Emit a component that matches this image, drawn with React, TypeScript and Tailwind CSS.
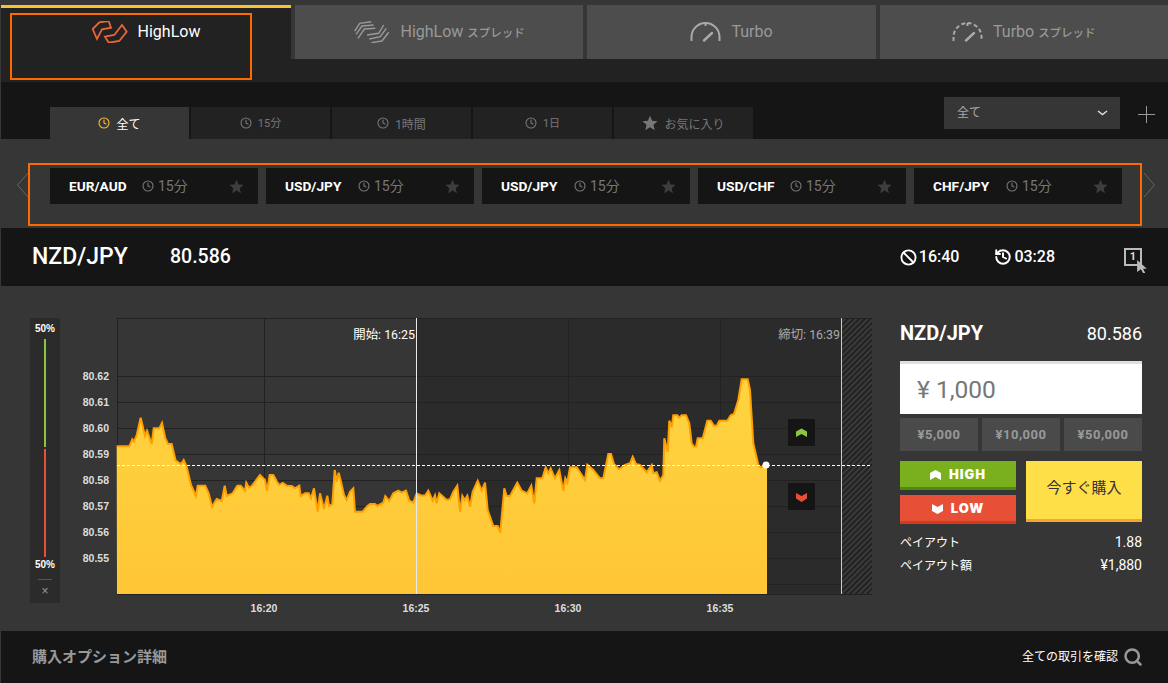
import { Ban, Clock, History, Search } from "lucide-react";

// chart outline traced from the picture, three crops each with their own x offset
const seg1 = [[290,409],[328,409],[337,388],[342,395],[350,375],[362,323],[375,378],[381,362],[395,402],[401,355],[418,355],[426,339],[436,385],[444,402],[455,402],[467,452],[483,462],[491,450],[500,470],[513,525],[528,558],[533,527],[556,527],[566,550],[576,590],[590,567],[605,573],[614,527],[620,558],[638,550],[652,527],[662,527],[675,543],[679,518],[687,533],[695,528],[720,495],[735,510],[741,543],[749,495],[760,495],[772,517],[778,525],[788,519],[800,527],[815,528],[825,535],[838,527],[842,558],[855,550],[866,550],[873,565],[882,535],[893,605]];
const seg2 = [[0,550],[12,597],[22,557],[27,588],[37,583],[44,480],[50,515],[56,488],[63,515],[72,555],[80,570],[90,545],[100,535],[105,605],[115,605],[128,605],[140,590],[150,582],[165,582],[172,588],[190,578],[196,558],[208,573],[220,550],[235,542],[245,548],[258,542],[268,572],[280,578],[290,550],[305,557],[316,556],[325,542],[338,572],[345,556],[350,580],[358,550],[380,570],[390,568],[400,545],[412,527],[420,605],[427,557],[434,570],[442,557],[450,590],[458,545],[473,512],[485,542],[495,518],[503,600],[520,648],[533,648],[541,668],[553,535],[560,558],[570,558],[592,518],[605,542],[622,550],[634,527],[643,580],[650,505],[667,505],[677,472],[685,490],[692,475],[705,505],[718,480],[730,543],[736,505],[742,518],[750,472],[770,472],[782,490],[795,510],[802,464],[820,480]];
const seg3 = [[0,505],[10,505],[25,432],[33,432],[42,462],[57,478],[75,465],[90,460],[98,440],[108,462],[120,465],[140,487],[155,465],[160,490],[170,487],[180,512],[190,495],[193,385],[203,425],[208,332],[215,352],[220,316],[232,316],[237,323],[245,316],[258,316],[268,340],[275,400],[282,410],[288,410],[293,385],[308,385],[322,332],[332,332],[342,347],[350,347],[358,332],[382,332],[392,316],[402,312],[415,270],[425,208],[443,208],[450,240],[460,400],[475,465],[482,472],[497,465]];

const toPts = (seg: number[][], off: number) =>
  seg.map(([x, y]) => `${(off + x / 3).toFixed(1)},${(310 + y / 3).toFixed(1)}`);
const outline = [...toPts(seg1, 20), ...toPts(seg2, 320), ...toPts(seg3, 600)].join(" ");
const area = `117,594 ${outline} 767,465 767,594`;

const yLabels = [
  ["80.62", 376], ["80.61", 402], ["80.60", 428], ["80.59", 454],
  ["80.58", 480], ["80.57", 506], ["80.56", 532], ["80.55", 558],
] as const;
const gridY = [376, 402, 428, 454, 480, 506, 532, 558, 584];
const gridX = [264, 568, 720];
const xLabels = [["16:20", 264], ["16:25", 416], ["16:30", 568], ["16:35", 720]] as const;

function HighLowLogo() {
  return (
    <svg width="36" height="22" viewBox="6 6 36 22" fill="none" stroke="#e8673a" strokeWidth="1.8">
      <polygon points="6.7,14 13.3,7.3 22.7,6 25,12.7 16,14.3 11,24" />
      <polygon points="36,10 40.7,16.7 33.3,26 22.7,27.7 19,21.7 28.3,20" />
    </svg>
  );
}

function SpreadLogo() {
  return (
    <svg width="37" height="22" viewBox="6 6 37 22" fill="none" stroke="#999" strokeWidth="1.4">
      <polyline points="7.7,16 12.7,8.3 24.3,6.7" />
      <polyline points="9,19.3 15,11 26.7,10" />
      <polyline points="11,23.3 17.3,14 28.3,13.3" />
      <polyline points="20,20 31.7,18.3 36.7,10" />
      <polyline points="22.3,24 33.3,21.7 39.3,13.3" />
      <polyline points="24.3,27.7 35,26 41.7,17.3" />
    </svg>
  );
}

function Gauge({ dashed }: { dashed?: boolean }) {
  return (
    <svg width="31" height="21" viewBox="0 0 31 21" fill="none" stroke="#aaa" strokeWidth="2">
      <path
        d="M1.5 20 V16 A14 14 0 0 1 29.5 16 V20"
        strokeDasharray={dashed ? "4 2.5" : undefined}
      />
      <path d="M15.5 2 V5" />
      <path d="M14 19.5 L22 12" strokeWidth="2.4" strokeLinecap="round" />
    </svg>
  );
}

function StarIcon({ size, color, className }: { size: number; color: string; className?: string }) {
  return (
    <svg width={size} height={size} viewBox="0 0 24 24" fill={color} className={className}>
      <polygon points="12,1 15.2,8.6 23.4,9.3 17.2,14.7 19.1,22.8 12,18.5 4.9,22.8 6.8,14.7 .6,9.3 8.8,8.6" />
    </svg>
  );
}

function TopTab({ active, children }: { active?: boolean; children: React.ReactNode }) {
  return (
    <div className={active
      ? "w-[290px] h-[54px] flex justify-center items-start gap-[10px] pt-[13px] bg-[#222222] border-t-[3px] border-[#fbc02d] text-white"
      : "flex-1 h-[54px] flex justify-center items-start gap-[10px] pt-[16px] bg-[#4d4d4d] text-[#999999]"}>
      {children}
    </div>
  );
}

function SubTab({ label, active, star, small }: { label: string; active?: boolean; star?: boolean; small?: boolean }) {
  return (
    <div className={active
      ? "w-[139px] h-[32px] flex items-center justify-center gap-[6px] bg-[#363636] text-white"
      : "w-[139px] h-[32px] flex items-center justify-center gap-[6px] bg-[#222222] text-[#777777]"}>
      {star
        ? <StarIcon size={16} color="#777777" />
        : <Clock size={12} strokeWidth={2.2} className={active ? "text-[#fbc02d]" : "text-[#777777]"} />}
      <span className={small ? "mt-[3px] text-[11px]" : "mt-[3px] text-[12px]"}>{label}</span>
    </div>
  );
}

function Pill({ pair }: { pair: string }) {
  return (
    <div className="w-[208px] h-[36px] flex items-center pl-[19px] pr-[14px] bg-[#151515]">
      <span className="w-[58px] text-[13.7px] font-bold text-white whitespace-nowrap">{pair}</span>
      <Clock size={12} strokeWidth={2.2} className="ml-[15px] text-[#777777]" />
      <span className="ml-[4px] text-[14px] text-[#777777]">15分</span>
      <StarIcon size={15} color="#3d3d3d" className="ml-auto" />
    </div>
  );
}

function Chart() {
  return (
    <svg width="802" height="307" viewBox="70 318 802 307" className="ml-[10px] shrink-0">
      <defs>
        <linearGradient id="fill" x1="0" y1="0" x2="0" y2="1">
          <stop offset="0" stopColor="#ffd440" />
          <stop offset="1" stopColor="#ffc636" />
        </linearGradient>
        <pattern id="hatch" width="4" height="4" patternUnits="userSpaceOnUse" patternTransform="rotate(45)">
          <rect width="4" height="4" fill="#3a3a3a" />
          <rect width="2" height="4" fill="#222222" />
        </pattern>
      </defs>
      <rect x="416" y="318" width="426" height="276" fill="#2b2b2b" />
      <rect x="842" y="318" width="30" height="276" fill="url(#hatch)" />
      {gridY.map((y) => (
        <line key={y} x1="117" x2="842" y1={y + 0.5} y2={y + 0.5} stroke="#222222" />
      ))}
      {gridX.map((x) => (
        <line key={x} x1={x + 0.5} x2={x + 0.5} y1="318" y2="594" stroke="#222222" />
      ))}
      <line x1="117" x2="872" y1="318.5" y2="318.5" stroke="#222222" />
      <line x1="117.5" x2="117.5" y1="318" y2="594" stroke="#222222" />

      <polygon points={area} fill="url(#fill)" />
      <polyline points={outline} fill="none" stroke="#ffa000" strokeWidth="2" />
      <line x1="117" x2="872" y1="594.5" y2="594.5" stroke="#222222" />
      <line x1="416.5" x2="416.5" y1="318" y2="594" stroke="#e8e8e8" />
      <line x1="841.5" x2="841.5" y1="318" y2="594" stroke="#cccccc" />
      <line x1="117" x2="872" y1="465.5" y2="465.5" stroke="#ffffff" strokeDasharray="3 2" />
      <circle cx="766" cy="465" r="3.5" fill="#ffffff" />

      <text x="415" y="339" textAnchor="end" fontSize="12.4" fill="#ffffff">開始: 16:25</text>
      <text x="840" y="339" textAnchor="end" fontSize="12.4" fill="#aaaaaa">締切: 16:39</text>

      <rect x="788" y="419" width="27" height="27" fill="#151515" />
      <polygon points="801.5,428.5 807,431.5 807,437 801.5,434 796,437 796,431.5" fill="#8cc63f" />
      <rect x="788" y="483" width="27" height="27" fill="#151515" />
      <polygon points="796,493 801.5,496 807,493 807,498.5 801.5,502 796,498.5" fill="#e75037" />

      {yLabels.map(([t, y]) => (
        <text key={t} x="109" y={y + 4} textAnchor="end" fontSize="10.5" fontWeight="700" fill="#dddddd" className="font-['Liberation_Sans']">{t}</text>
      ))}
      {xLabels.map(([t, x]) => (
        <text key={t} x={x} y="612" textAnchor="middle" fontSize="10.5" fontWeight="700" fill="#dddddd" className="font-['Liberation_Sans']">{t}</text>
      ))}
    </svg>
  );
}

export default function App() {
  return (
    <div className="w-[1168px] h-[683px] overflow-hidden pl-px bg-[#363636] font-['Roboto','Noto_Sans_CJK_JP',sans-serif]">
      {/* product tabs */}
      <div className="relative pt-[5px] flex gap-[4px]">
        <TopTab active>
          <HighLowLogo />
          <span className="mt-px text-[16px] leading-[20px]">HighLow</span>
        </TopTab>
        <TopTab>
          <SpreadLogo />
          <span className="mt-px text-[16px] leading-[20px]">HighLow <span className="text-[11.5px] font-medium">スプレッド</span></span>
        </TopTab>
        <TopTab>
          <Gauge />
          <span className="mt-px text-[16px] leading-[20px]">Turbo</span>
        </TopTab>
        <TopTab>
          <Gauge dashed />
          <span className="mt-px text-[16px] leading-[20px]">Turbo <span className="text-[11.5px] font-medium">スプレッド</span></span>
        </TopTab>
        <div className="absolute left-[9px] top-[13px] w-[242px] h-[67px] border-2 border-[#ff6a00]" />
      </div>
      <div className="h-[23px] bg-[#222222]" />

      {/* time filter */}
      <div className="h-[57px] flex items-end pl-[49px] bg-[#151515]">
        <div className="flex gap-[2px]">
          <SubTab label="全て" active />
          <SubTab label="15分" small />
          <SubTab label="1時間" />
          <SubTab label="1日" small />
          <SubTab label="お気に入り" star />
        </div>
        <div className="self-start mt-[15px] ml-[191px] w-[176px] h-[32px] flex items-center justify-between pl-[13px] pr-[12px] bg-[#363636] text-[12px] text-[#aaaaaa]">
          <span>全て</span>
          <svg width="11" height="6" viewBox="0 0 11 6" fill="none" stroke="#dddddd" strokeWidth="1.5"><path d="M1 1 L5.5 4.5 L10 1" /></svg>
        </div>
        <svg width="17" height="17" viewBox="0 0 17 17" stroke="#999999" className="self-start mt-[24px] ml-[18px]">
          <path d="M8.5 0 V17 M0 8.5 H17" />
        </svg>
      </div>

      {/* favourites strip */}
      <div className="h-[89px] flex pl-[16px] pt-[24px]">
        <svg width="11" height="24" viewBox="0 0 11 24" fill="none" stroke="#666666" className="mt-[10px]">
          <path d="M11 0 L0.5 12 L11 24" />
        </svg>
        <div className="w-[1114px] h-[63px] flex gap-[8px] pl-[20px] pt-[3px] border-2 border-[#ff6a00]">
          <Pill pair="EUR/AUD" />
          <Pill pair="USD/JPY" />
          <Pill pair="USD/JPY" />
          <Pill pair="USD/CHF" />
          <Pill pair="CHF/JPY" />
        </div>
        <svg width="11" height="24" viewBox="0 0 11 24" fill="none" stroke="#666666" className="mt-[10px] ml-[2px]">
          <path d="M0 0 L10.5 12 L0 24" />
        </svg>
      </div>

      {/* current pair */}
      <div className="h-[58px] flex items-center pl-[31px] bg-[#151515] text-white">
        <span className="w-[138px] text-[23px] font-medium">NZD/JPY</span>
        <span className="text-[19.5px] font-medium">80.586</span>
        <div className="ml-auto flex items-center text-[16px] font-medium">
          <Ban size={17} strokeWidth={2.6} />
          <span className="ml-[2px]">16:40</span>
          <History size={18} strokeWidth={2.6} className="ml-[35px]" />
          <span className="ml-[2px]">03:28</span>
          <div className="relative ml-[69px] mr-[26px] w-[18px] h-[18px] flex items-center justify-center border-2 border-[#bbbbbb] text-[11px] font-bold text-[#dddddd]">
            1
            <svg width="10" height="13" viewBox="0 0 9 12" fill="#bbbbbb" className="absolute -right-[7px] top-[10px]">
              <path d="M0 0 L9 8 L5.5 8 L7.5 12 L5.5 12 L3.5 8.5 L0 11 Z" />
            </svg>
          </div>
        </div>
      </div>

      {/* chart and order panel */}
      <div className="h-[345px] flex items-start pt-[32px] pl-[29px]">
        <div className="w-[30px] h-[285px] shrink-0 flex flex-col items-center bg-[#2b2b2b] text-[10px] font-bold text-white font-['Liberation_Sans']">
          <span className="mt-[5px] leading-[12px]">50%</span>
          <div className="mt-[4px] w-[2px] h-[108px] bg-[#8cc63f]" />
          <div className="mt-[2px] w-[2px] h-[108px] bg-[#e75037]" />
          <span className="mt-[2px] leading-[12px]">50%</span>
          <div className="mt-[8px] w-[14px] h-px bg-[#555555]" />
          <span className="mt-[5px] leading-[12px] text-[12px] font-normal text-[#999999]">×</span>
        </div>
        <Chart />
        <div className="ml-[28px] w-[242px] shrink-0 text-white">
          <div className="flex items-center justify-between h-[30px]">
            <span className="text-[20px] font-bold">NZD/JPY</span>
            <span className="text-[18px]">80.586</span>
          </div>
          <div className="mt-[13px] h-[53px] flex items-center pl-[17px] pt-[2px] bg-white border-t-[3px] border-[#e0e0e0] text-[24.5px] text-[#777777]">¥ 1,000</div>
          <div className="mt-[4px] grid grid-cols-3 gap-[4px]">
            {["¥5,000", "¥10,000", "¥50,000"].map((v) => (
              <div key={v} className="h-[33px] flex items-center justify-center bg-[#4a4a4a] text-[13px] font-bold tracking-[0.5px] text-[#999999]">{v}</div>
            ))}
          </div>
          <div className="mt-[10px] flex justify-between">
            <div className="w-[116px] flex flex-col gap-[5px]">
              <div className="h-[29px] flex items-center justify-center gap-[8px] pt-px bg-[#7ab01e] border-b-[3px] border-[#4f8a10] text-[13px] font-black tracking-[1px] font-['Inter',sans-serif]">
                <svg width="11" height="10" viewBox="0 0 11 10" fill="#ffffff"><polygon points="5.5,0 11,3 11,10 5.5,7 0,10 0,3" /></svg>
                HIGH
              </div>
              <div className="h-[29px] flex items-center justify-center gap-[8px] pt-px bg-[#e75037] border-b-[3px] border-[#d63a1c] text-[13px] font-black tracking-[1px] font-['Inter',sans-serif]">
                <svg width="11" height="10" viewBox="0 0 11 10" fill="#ffffff"><polygon points="0,0 5.5,3 11,0 11,7 5.5,10 0,7" /></svg>
                LOW
              </div>
            </div>
            <div className="w-[116px] h-[61px] flex items-center justify-center pb-[3px] bg-[#ffdf47] border-b-[3px] border-[#f7a635] text-[15px] text-[#333333]">今すぐ購入</div>
          </div>
          <div className="mt-[7px] flex justify-between items-center h-[23px]">
            <span className="text-[12px]">ペイアウト</span>
            <span className="text-[14px]">1.88</span>
          </div>
          <div className="flex justify-between items-center h-[23px]">
            <span className="text-[12px]">ペイアウト額</span>
            <span className="text-[14px]">¥1,880</span>
          </div>
        </div>
      </div>

      {/* footer */}
      <div className="h-[52px] flex items-center pl-[31px] pr-[25px] bg-[#151515]">
        <span className="text-[15px] font-bold text-[#999999]">購入オプション詳細</span>
        <span className="ml-auto text-[12px] text-white">全ての取引を確認</span>
        <Search size={20} strokeWidth={3} className="ml-[5px] text-[#999999]" />
      </div>
    </div>
  );
}
